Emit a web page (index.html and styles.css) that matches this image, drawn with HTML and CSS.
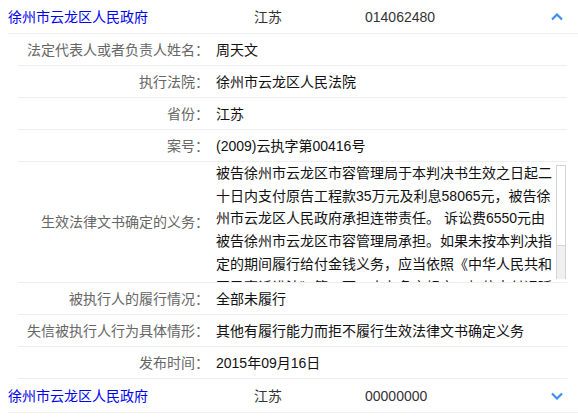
FILE: index.html
```html
<!DOCTYPE html>
<html lang="zh-CN">
<head>
<meta charset="utf-8">
<title>失信被执行人</title>
<link rel="stylesheet" href="styles.css">
</head>
<body>
<div class="item">
  <div class="item-head">
    <a class="name" href="#">徐州市云龙区人民政府</a>
    <span class="prov">江苏</span>
    <span class="code">014062480</span>
    <svg class="chev" width="12" height="8" viewBox="0 0 12 8"><polyline points="1,6.5 6,1.5 11,6.5" fill="none" stroke="#3d8ef0" stroke-width="2.2"/></svg>
  </div>
  <div class="details">
    <div class="row"><div class="label">法定代表人或者负责人姓名：</div><div class="value">周天文</div></div>
    <div class="row"><div class="label">执行法院：</div><div class="value">徐州市云龙区人民法院</div></div>
    <div class="row"><div class="label">省份：</div><div class="value">江苏</div></div>
    <div class="row"><div class="label">案号：</div><div class="value">(2009)云执字第00416号</div></div>
    <div class="row row-tall">
      <div class="label">生效法律文书确定的义务：</div>
      <div class="value scroll-wrap">
        <div class="scroll">被告徐州市云龙区市容管理局于本判决书生效之日起二十日内支付原告工程款35万元及利息58065元，被告徐州市云龙区人民政府承担连带责任。 诉讼费6550元由被告徐州市云龙区市容管理局承担。如果未按本判决指定的期间履行给付金钱义务，应当依照《中华人民共和国民事诉讼法》第二百二十九条之规定，加倍支付迟延履行期间的债务利息。</div>
        <div class="sbar"><div class="thumb"></div></div>
      </div>
    </div>
    <div class="row"><div class="label">被执行人的履行情况：</div><div class="value">全部未履行</div></div>
    <div class="row"><div class="label">失信被执行人行为具体情形：</div><div class="value">其他有履行能力而拒不履行生效法律文书确定义务</div></div>
    <div class="row"><div class="label">发布时间：</div><div class="value">2015年09月16日</div></div>
  </div>
</div>
<div class="item">
  <div class="item-head">
    <a class="name" href="#">徐州市云龙区人民政府</a>
    <span class="prov">江苏</span>
    <span class="code">00000000</span>
    <svg class="chev" width="12" height="8" viewBox="0 0 12 8"><polyline points="1,1.5 6,6.5 11,1.5" fill="none" stroke="#3d8ef0" stroke-width="2.2"/></svg>
  </div>
</div>
</body>
</html>
```
FILE: styles.css
```css
html, body {
  margin: 0;
  background: #fff;
}
body {
  padding: 0 0 0 8px;
  font-family: "Liberation Sans", "Noto Sans CJK SC", sans-serif;
  font-size: 14px;
  color: #222;
}
.item-head {
  display: grid;
  grid-template-columns: 246px 111px 1fr 12px;
  align-items: center;
  height: 33px;
  padding-right: 15px;
  border-bottom: 1px solid #eee;
}
.name {
  color: #0000ee;
  text-decoration: none;
  line-height: 20px;
}
.prov, .code {
  color: #333;
  line-height: 20px;
}
.chev {
  display: block;
}
.details {
  margin: 0 11px 0 10px;
}
.row {
  display: flex;
  align-items: center;
  height: 31px;
  border-bottom: 1px solid #eee;
}
.row-tall {
  height: 120px;
}
.label {
  width: 191px;
  flex: none;
  text-align: right;
  color: #666;
  line-height: 20px;
}
.value {
  margin-left: 7px;
  line-height: 20px;
  color: #111;
}
.scroll-wrap {
  flex: 1;
  align-self: stretch;
  display: flex;
  overflow: hidden;
}
.scroll {
  flex: 1;
  height: 120px;
  overflow: hidden;
  line-height: 22.7px;
}
.sbar {
  flex: none;
  width: 8px;
  margin: 3px 1px 3px 1px;
  border: 1px solid #d4d4d4;
  border-bottom: none;
  background: #f0f0f0;
}
.thumb {
  height: 79px;
  background: #fff;
  border-bottom: 1px solid #d4d4d4;
}
```
